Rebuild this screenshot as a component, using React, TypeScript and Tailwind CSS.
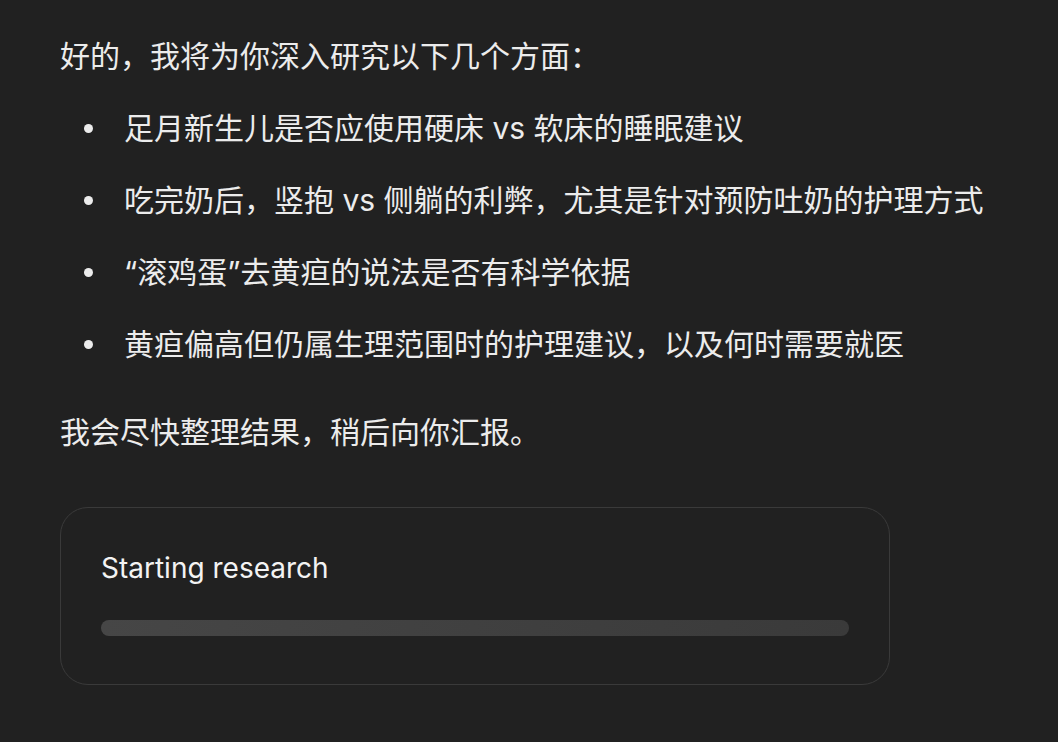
import React from "react";

const items = [
  "足月新生儿是否应使用硬床 vs 软床的睡眠建议",
  "吃完奶后，竖抱 vs 侧躺的利弊，尤其是针对预防吐奶的护理方式",
  "“滚鸡蛋”去黄疸的说法是否有科学依据",
  "黄疸偏高但仍属生理范围时的护理建议，以及何时需要就医",
];

export default function App() {
  return (
    <div
      className="min-h-[742px] w-full bg-[#212121] text-[#ececec] pl-[60px] pt-[34px]"
      style={{ fontFamily: 'Inter, "Noto Sans CJK SC", sans-serif' }}
    >
      <p className="text-[30px] leading-[44px]">好的，我将为你深入研究以下几个方面：</p>
      <ul className="mt-[28px] flex flex-col gap-[28px]">
        {items.map((t) => (
          <li key={t} className="flex items-center pl-[24px] text-[30px] leading-[44px] whitespace-nowrap">
            <span className="mr-[31px] h-[9px] w-[9px] shrink-0 rounded-full bg-[#ececec]" />
            <span>{t}</span>
          </li>
        ))}
      </ul>
      <p className="mt-[44px] text-[30px] leading-[44px]">我会尽快整理结果，稍后向你汇报。</p>
      <div className="mt-[53px] flex h-[178px] w-[830px] flex-col rounded-[28px] border-[1.5px] border-[#3a3a3a] px-[40px] pt-[42px]">
        <div className="text-[28px] leading-[36px] text-[#f3f3f3]">Starting research</div>
        <div className="mt-[34px] h-[16px] w-full rounded-full bg-gradient-to-r from-[#464646] to-[#3a3a3a]" />
      </div>
    </div>
  );
}
